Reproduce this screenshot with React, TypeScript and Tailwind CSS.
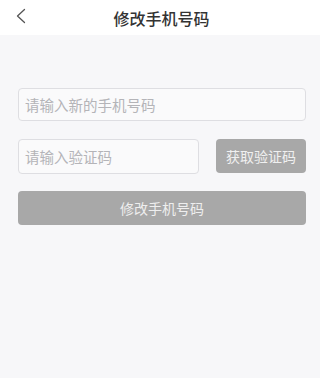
import { useState } from "react";

function BackIcon() {
    return (
        <svg width="12" height="16" viewBox="0 0 12 16" fill="none">
            <polyline points="9.5,1.5 2.5,8 9.5,14.5" stroke="#555555" strokeWidth="1.3" strokeLinecap="round" strokeLinejoin="round" />
        </svg>
    );
}

function App() {
    const [phone, setPhone] = useState<string>("");
    const [code, setCode] = useState<string>("");

    return (
        <div className="min-h-screen bg-[#f7f7f9] font-['Noto_Sans_CJK_SC',sans-serif]">
            <header className="relative h-[35px] bg-white flex items-center justify-center">
                <button className="absolute left-[15px] top-[8px]">
                    <BackIcon />
                </button>
                <h1 className="text-[16px] font-medium text-[#333333] leading-none pl-[3px]">修改手机号码</h1>
            </header>

            <main className="pl-[18px] pr-[14px] pt-[53px] flex flex-col">
                <input
                    className="h-[33px] w-full rounded-[4px] border border-[#dedee2] bg-[#fafafb] px-[6px] text-[14.5px] text-[#333333] placeholder:text-[#b4b4b8] outline-none"
                    type="tel"
                    placeholder="请输入新的手机号码"
                    value={ phone }
                    onChange={ (e) => setPhone(e.target.value) }
                />

                <div className="mt-[18px] flex gap-[17px]">
                    <input
                        className="h-[35px] w-[181px] rounded-[4px] border border-[#dedee2] bg-[#fafafb] px-[6px] text-[14.5px] text-[#333333] placeholder:text-[#b4b4b8] outline-none"
                        type="text"
                        placeholder="请输入验证码"
                        value={ code }
                        onChange={ (e) => setCode(e.target.value) }
                    />
                    <button className="h-[34px] flex-1 rounded-[4px] bg-[#a8a8a8] text-[14px] text-[#f0f0f0]">
                        获取验证码
                    </button>
                </div>

                <button className="mt-[17px] h-[34px] w-full rounded-[4px] bg-[#a8a8a8] text-[14px] text-[#eeeeee]">
                    修改手机号码
                </button>
            </main>
        </div>
    );
}

export default App;
